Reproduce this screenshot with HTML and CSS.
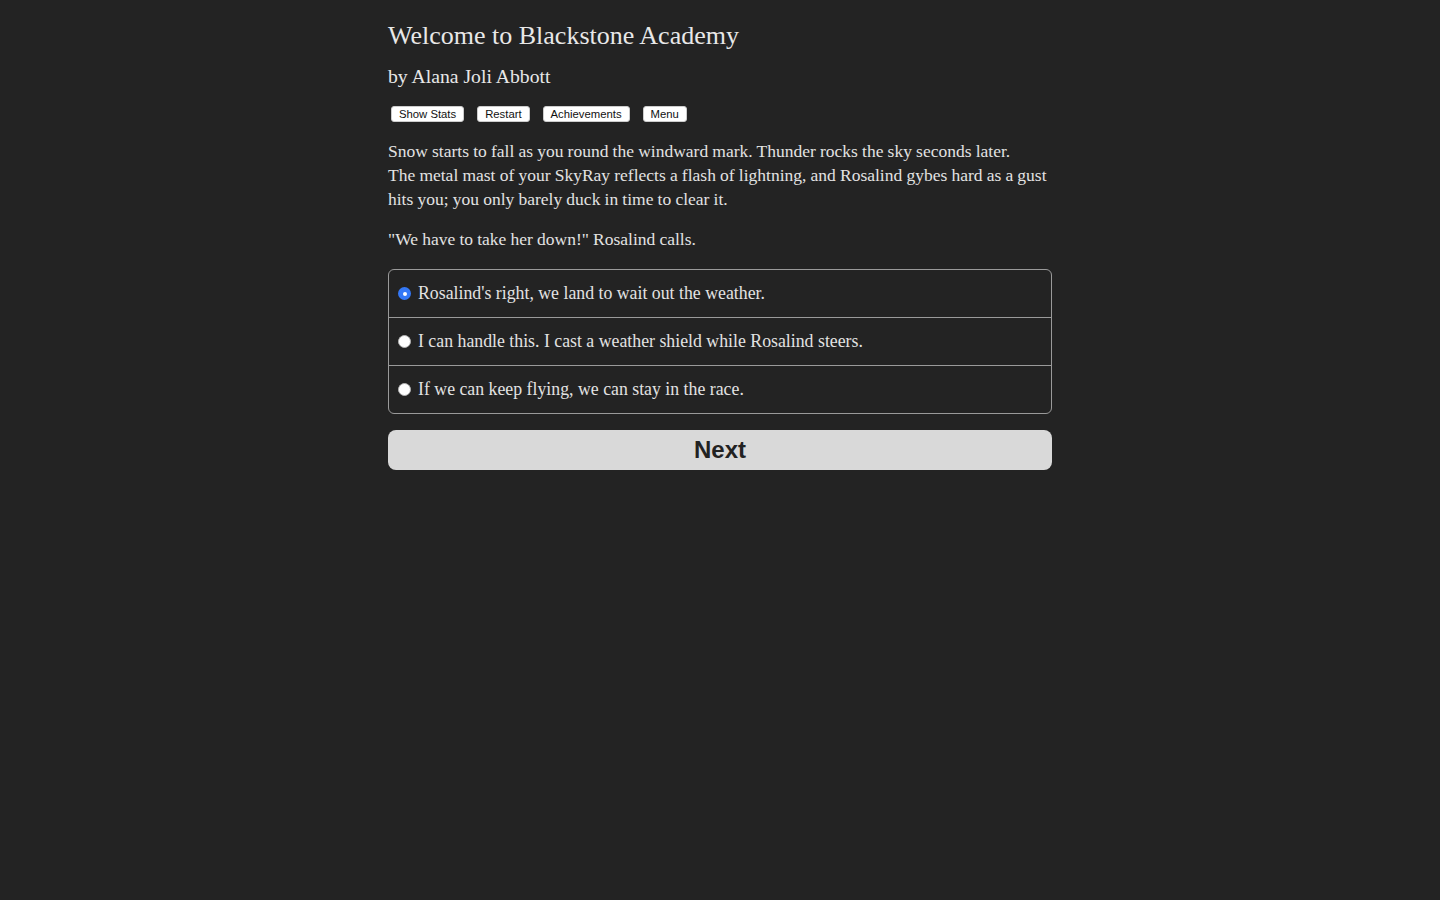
FILE: index.html
```html
<!DOCTYPE html>
<html lang="en">
<head>
<meta charset="utf-8">
<title>Welcome to Blackstone Academy</title>
<link rel="stylesheet" href="styles.css">
</head>
<body>
<main class="page">
  <h1 class="title">Welcome to Blackstone Academy</h1>
  <h2 class="author">by Alana Joli Abbott</h2>
  <div class="toolbar">
    <button class="tool-btn">Show Stats</button>
    <button class="tool-btn">Restart</button>
    <button class="tool-btn">Achievements</button>
    <button class="tool-btn">Menu</button>
  </div>
  <p class="story">Snow starts to fall as you round the windward mark. Thunder rocks the sky seconds later.<br>The metal mast of your SkyRay reflects a flash of lightning, and Rosalind gybes hard as a gust hits you; you only barely duck in time to clear it.</p>
  <p class="story">"We have to take her down!" Rosalind calls.</p>
  <form class="choices">
    <label class="choice"><span class="radio checked"></span><span>Rosalind's right, we land to wait out the weather.</span></label>
    <label class="choice"><span class="radio"></span><span>I can handle this. I cast a weather shield while Rosalind steers.</span></label>
    <label class="choice"><span class="radio"></span><span>If we can keep flying, we can stay in the race.</span></label>
  </form>
  <button class="next-btn">Next</button>
</main>
</body>
</html>
```
FILE: styles.css
```css
html, body {
  margin: 0;
  padding: 0;
  background: #232323;
}
body {
  color: #e2e2e2;
  font-family: "Liberation Serif", "DejaVu Serif", serif;
}
.page {
  width: 664px;
  margin: 0 auto;
  padding-top: 19px;
}
.title {
  margin: 0;
  font-size: 26px;
  font-weight: normal;
  line-height: 34px;
  color: #e8e8e8;
}
.author {
  margin: 10px 0 0 0;
  font-size: 19.7px;
  font-weight: normal;
  line-height: 26px;
  color: #e8e8e8;
}
.toolbar {
  display: flex;
  gap: 13px;
  margin: 17px 0 0 3px;
}
.tool-btn {
  font-family: "Liberation Sans", Arial, sans-serif;
  font-size: 11.3px;
  line-height: 14px;
  color: #111;
  background: #fff;
  border: 1px solid #ccc;
  border-radius: 3px;
  padding: 0 7px;
  height: 16px;
}
.story {
  margin: 17px 0 0 0;
  font-size: 17.5px;
  word-spacing: -0.2px;
  line-height: 24px;
}
.story + .story {
  margin-top: 16px;
}
.choices {
  margin: 18px 0 0 0;
  border: 1px solid #9a9a9a;
  border-radius: 6px;
}
.choice {
  display: flex;
  align-items: center;
  gap: 7px;
  height: 47px;
  padding: 0 9px;
  font-size: 17.8px;
  border-top: 1px solid #9a9a9a;
}
.choice:first-child {
  border-top: none;
}
.radio {
  width: 13px;
  height: 13px;
  border-radius: 50%;
  background: #fff;
  border: 1px solid #b5b5b5;
  flex: none;
  box-sizing: border-box;
}
.radio.checked {
  background: #3478f6;
  border: 4px solid #3478f6;
  position: relative;
}
.radio.checked::after {
  content: "";
  position: absolute;
  left: 50%;
  top: 50%;
  width: 4px;
  height: 4px;
  margin: -2px 0 0 -2px;
  border-radius: 50%;
  background: #fff;
}
.next-btn {
  display: block;
  width: 100%;
  height: 40px;
  margin-top: 16px;
  border: none;
  border-radius: 8px;
  background: #d9d9d9;
  color: #222;
  font-family: "Liberation Sans", Arial, sans-serif;
  font-weight: bold;
  font-size: 24px;
}
```
